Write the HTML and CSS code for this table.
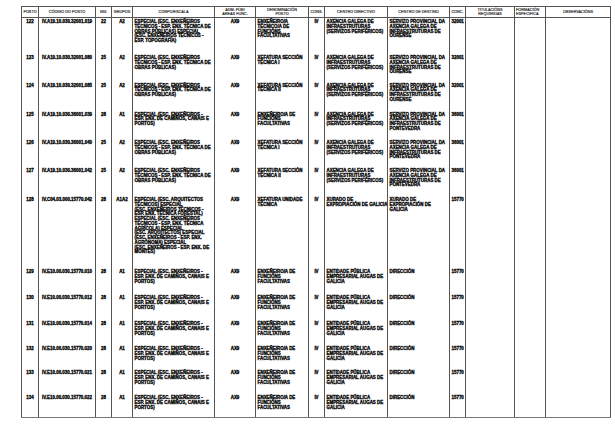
FILE: index.html
```html
<!DOCTYPE html>
<html>
<head>
<meta charset="utf-8">
<link rel="stylesheet" href="styles.css">
</head>
<body>
<div class="page">
<table class="t">
<colgroup>
<col class="c1"><col class="c2"><col class="c3"><col class="c4"><col class="c5"><col class="c6"><col class="c7"><col class="c8"><col class="c9"><col class="c10"><col class="c11"><col class="c12"><col class="c13"><col class="c14">
</colgroup>
<thead>
<tr class="hd">
<th>POSTO</th><th>CÓDIGO DO POSTO</th><th>NIV.</th><th class="g">GRUPOS</th><th class="gl">CORPO/ESCALA</th><th>ADM. PÚB/<br>ÁREAS FUNC.</th><th>DENOMINACIÓN<br>POSTO</th><th class="gl">CONS.</th><th class="gl">CENTRO DIRECTIVO</th><th>CENTRO DE DESTINO</th><th class="gl">CONC.</th><th class="gl">TITULACIÓNS<br>REQUIRIDAS</th><th class="lft">FORMACIÓN<br>ESPECÍFICA</th><th>OBSERVACIÓNS</th>
</tr>
</thead>
<tbody>
<tr class="r1">
<td class="ctr">122</td><td class="ctr">IV.A19.10.030.32001.019</td><td class="ctr">22</td><td class="ctr">A2</td><td class="gl">ESPECIAL (ESC. ENXEÑEIROS<br>TÉCNICOS - ESP. ENX. TÉCNICA DE<br>OBRAS PÚBLICAS) ESPECIAL<br>(ESC. ENXEÑEIROS TÉCNICOS -<br>ESP. TOPOGRAFÍA)</td><td class="ctr">AX9</td><td>ENXEÑEIRO/A<br>TÉCNICO/A DE<br>FUNCIÓNS<br>FACULTATIVAS</td><td class="ctr gl">IV</td><td class="gl">AXENCIA GALEGA DE<br>INFRAESTRUTURAS<br>(SERVIZOS PERIFÉRICOS)</td><td>SERVIZO PROVINCIAL DA<br>AXENCIA GALEGA DE<br>INFRAESTRUTURAS DE<br>OURENSE</td><td class="gl">32001</td><td class="gl"></td><td></td><td></td>
</tr>
<tr class="r2">
<td class="ctr">123</td><td class="ctr">IV.A19.10.030.32001.080</td><td class="ctr">25</td><td class="ctr">A2</td><td class="gl">ESPECIAL (ESC. ENXEÑEIROS<br>TÉCNICOS - ESP. ENX. TÉCNICA DE<br>OBRAS PÚBLICAS)</td><td class="ctr">AX9</td><td>XEFATURA SECCIÓN<br>TÉCNICA I</td><td class="ctr gl">IV</td><td class="gl">AXENCIA GALEGA DE<br>INFRAESTRUTURAS<br>(SERVIZOS PERIFÉRICOS)</td><td>SERVIZO PROVINCIAL DA<br>AXENCIA GALEGA DE<br>INFRAESTRUTURAS DE<br>OURENSE</td><td class="gl">32001</td><td class="gl"></td><td></td><td></td>
</tr>
<tr class="r3">
<td class="ctr">124</td><td class="ctr">IV.A19.10.030.32001.085</td><td class="ctr">25</td><td class="ctr">A2</td><td class="gl">ESPECIAL (ESC. ENXEÑEIROS<br>TÉCNICOS - ESP. ENX. TÉCNICA DE<br>OBRAS PÚBLICAS)</td><td class="ctr">AX9</td><td>XEFATURA SECCIÓN<br>TÉCNICA II</td><td class="ctr gl">IV</td><td class="gl">AXENCIA GALEGA DE<br>INFRAESTRUTURAS<br>(SERVIZOS PERIFÉRICOS)</td><td>SERVIZO PROVINCIAL DA<br>AXENCIA GALEGA DE<br>INFRAESTRUTURAS DE<br>OURENSE</td><td class="gl">32001</td><td class="gl"></td><td></td><td></td>
</tr>
<tr class="r4">
<td class="ctr">125</td><td class="ctr">IV.A19.10.030.36001.039</td><td class="ctr">28</td><td class="ctr">A1</td><td class="gl">ESPECIAL (ESC. ENXEÑEIROS -<br>ESP. ENX. DE CAMIÑOS, CANAIS E<br>PORTOS)</td><td class="ctr">AX9</td><td>ENXEÑEIRO/A DE<br>FUNCIÓNS<br>FACULTATIVAS</td><td class="ctr gl">IV</td><td class="gl">AXENCIA GALEGA DE<br>INFRAESTRUTURAS<br>(SERVIZOS PERIFÉRICOS)</td><td>SERVIZO PROVINCIAL DA<br>AXENCIA GALEGA DE<br>INFRAESTRUTURAS DE<br>PONTEVEDRA</td><td class="gl">36001</td><td class="gl"></td><td></td><td></td>
</tr>
<tr class="r5">
<td class="ctr">126</td><td class="ctr">IV.A19.10.030.36001.040</td><td class="ctr">25</td><td class="ctr">A2</td><td class="gl">ESPECIAL (ESC. ENXEÑEIROS<br>TÉCNICOS - ESP. ENX. TÉCNICA DE<br>OBRAS PÚBLICAS)</td><td class="ctr">AX9</td><td>XEFATURA SECCIÓN<br>TÉCNICA I</td><td class="ctr gl">IV</td><td class="gl">AXENCIA GALEGA DE<br>INFRAESTRUTURAS<br>(SERVIZOS PERIFÉRICOS)</td><td>SERVIZO PROVINCIAL DA<br>AXENCIA GALEGA DE<br>INFRAESTRUTURAS DE<br>PONTEVEDRA</td><td class="gl">36001</td><td class="gl"></td><td></td><td></td>
</tr>
<tr class="r6">
<td class="ctr">127</td><td class="ctr">IV.A19.10.030.36001.042</td><td class="ctr">25</td><td class="ctr">A2</td><td class="gl">ESPECIAL (ESC. ENXEÑEIROS<br>TÉCNICOS - ESP. ENX. TÉCNICA DE<br>OBRAS PÚBLICAS)</td><td class="ctr">AX9</td><td>XEFATURA SECCIÓN<br>TÉCNICA II</td><td class="ctr gl">IV</td><td class="gl">AXENCIA GALEGA DE<br>INFRAESTRUTURAS<br>(SERVIZOS PERIFÉRICOS)</td><td>SERVIZO PROVINCIAL DA<br>AXENCIA GALEGA DE<br>INFRAESTRUTURAS DE<br>PONTEVEDRA</td><td class="gl">36001</td><td class="gl"></td><td></td><td></td>
</tr>
<tr class="r7">
<td class="ctr">128</td><td class="ctr">IV.C04.03.000.15770.042</td><td class="ctr">28</td><td class="ctr">A1A2</td><td class="gl">ESPECIAL (ESC. ARQUITECTOS<br>TÉCNICOS) ESPECIAL<br>(ESC. ENXEÑEIROS TÉCNICOS -<br>ESP. ENX. TÉCNICA FORESTAL)<br>ESPECIAL (ESC. ENXEÑEIROS<br>TÉCNICOS - ESP. ENX. TÉCNICA<br>AGRÍCOLA) ESPECIAL<br>(ESC. ARQUITECTOS) ESPECIAL<br>(ESC. ENXEÑEIROS - ESP. ENX.<br>AGRÓNOMA) ESPECIAL<br>(ESC. ENXEÑEIROS - ESP. ENX. DE<br>MONTES)</td><td class="ctr">AX9</td><td>XEFATURA UNIDADE<br>TÉCNICA</td><td class="ctr gl">IV</td><td class="gl">XURADO DE<br>EXPROPIACIÓN DE GALICIA</td><td>XURADO DE<br>EXPROPIACIÓN DE<br>GALICIA</td><td class="gl">15770</td><td class="gl"></td><td></td><td></td>
</tr>
<tr class="r8">
<td class="ctr">129</td><td class="ctr">IV.E10.00.030.15770.010</td><td class="ctr">28</td><td class="ctr">A1</td><td class="gl">ESPECIAL (ESC. ENXEÑEIROS -<br>ESP. ENX. DE CAMIÑOS, CANAIS E<br>PORTOS)</td><td class="ctr">AX9</td><td>ENXEÑEIRO/A DE<br>FUNCIÓNS<br>FACULTATIVAS</td><td class="ctr gl">IV</td><td class="gl">ENTIDADE PÚBLICA<br>EMPRESARIAL AUGAS DE<br>GALICIA</td><td>DIRECCIÓN</td><td class="gl">15770</td><td class="gl"></td><td></td><td></td>
</tr>
<tr class="r9">
<td class="ctr">130</td><td class="ctr">IV.E10.00.030.15770.012</td><td class="ctr">28</td><td class="ctr">A1</td><td class="gl">ESPECIAL (ESC. ENXEÑEIROS -<br>ESP. ENX. DE CAMIÑOS, CANAIS E<br>PORTOS)</td><td class="ctr">AX9</td><td>ENXEÑEIRO/A DE<br>FUNCIÓNS<br>FACULTATIVAS</td><td class="ctr gl">IV</td><td class="gl">ENTIDADE PÚBLICA<br>EMPRESARIAL AUGAS DE<br>GALICIA</td><td>DIRECCIÓN</td><td class="gl">15770</td><td class="gl"></td><td></td><td></td>
</tr>
<tr class="r10">
<td class="ctr">131</td><td class="ctr">IV.E10.00.030.15770.014</td><td class="ctr">28</td><td class="ctr">A1</td><td class="gl">ESPECIAL (ESC. ENXEÑEIROS -<br>ESP. ENX. DE CAMIÑOS, CANAIS E<br>PORTOS)</td><td class="ctr">AX9</td><td>ENXEÑEIRO/A DE<br>FUNCIÓNS<br>FACULTATIVAS</td><td class="ctr gl">IV</td><td class="gl">ENTIDADE PÚBLICA<br>EMPRESARIAL AUGAS DE<br>GALICIA</td><td>DIRECCIÓN</td><td class="gl">15770</td><td class="gl"></td><td></td><td></td>
</tr>
<tr class="r11">
<td class="ctr">132</td><td class="ctr">IV.E10.00.030.15770.020</td><td class="ctr">28</td><td class="ctr">A1</td><td class="gl">ESPECIAL (ESC. ENXEÑEIROS -<br>ESP. ENX. DE CAMIÑOS, CANAIS E<br>PORTOS)</td><td class="ctr">AX9</td><td>ENXEÑEIRO/A DE<br>FUNCIÓNS<br>FACULTATIVAS</td><td class="ctr gl">IV</td><td class="gl">ENTIDADE PÚBLICA<br>EMPRESARIAL AUGAS DE<br>GALICIA</td><td>DIRECCIÓN</td><td class="gl">15770</td><td class="gl"></td><td></td><td></td>
</tr>
<tr class="r12">
<td class="ctr">133</td><td class="ctr">IV.E10.00.030.15770.021</td><td class="ctr">28</td><td class="ctr">A1</td><td class="gl">ESPECIAL (ESC. ENXEÑEIROS -<br>ESP. ENX. DE CAMIÑOS, CANAIS E<br>PORTOS)</td><td class="ctr">AX9</td><td>ENXEÑEIRO/A DE<br>FUNCIÓNS<br>FACULTATIVAS</td><td class="ctr gl">IV</td><td class="gl">ENTIDADE PÚBLICA<br>EMPRESARIAL AUGAS DE<br>GALICIA</td><td>DIRECCIÓN</td><td class="gl">15770</td><td class="gl"></td><td></td><td></td>
</tr>
<tr class="r13">
<td class="ctr">134</td><td class="ctr">IV.E10.00.030.15770.022</td><td class="ctr">28</td><td class="ctr">A1</td><td class="gl">ESPECIAL (ESC. ENXEÑEIROS -<br>ESP. ENX. DE CAMIÑOS, CANAIS E<br>PORTOS)</td><td class="ctr">AX9</td><td>ENXEÑEIRO/A DE<br>FUNCIÓNS<br>FACULTATIVAS</td><td class="ctr gl">IV</td><td class="gl">ENTIDADE PÚBLICA<br>EMPRESARIAL AUGAS DE<br>GALICIA</td><td>DIRECCIÓN</td><td class="gl">15770</td><td class="gl"></td><td></td><td></td>
</tr>
</tbody>
</table>
</div>
</body>
</html>
```

FILE: styles.css
```css
html, body {
  margin: 0;
  padding: 0;
  background: #ffffff;
}

.page {
  padding: 6px 0 0 21px;
  font-family: "Liberation Sans", Arial, sans-serif;
  color: #000;
}

.t {
  border-collapse: collapse;
  table-layout: fixed;
  width: 589px;
}

.c1 { width: 17px; }
.c2 { width: 57px; }
.c3 { width: 16px; }
.c4 { width: 21px; }
.c5 { width: 82px; }
.c6 { width: 41px; }
.c7 { width: 53px; }
.c8 { width: 16px; }
.c9 { width: 63px; }
.c10 { width: 62px; }
.c11 { width: 16px; }
.c12 { width: 49px; }
.c13 { width: 31px; }
.c14 { width: 65px; }

.t th {
  font-size: 3.8px;
  line-height: 4px;
  font-weight: normal;
  color: #1a1a1a;
  -webkit-text-stroke: 0.15px #1a1a1a;
  text-align: center;
  vertical-align: middle;
  white-space: nowrap;
  overflow: hidden;
  padding: 0 1px;
  height: 10px;
  border-top: 1px solid #555;
  border-bottom: 1px solid #555;
  border-left: 1px solid #555;
  border-right: 1px solid #555;
}

.t th.lft {
  text-align: left;
}

.t td {
  font-size: 4.45px;
  line-height: 4.77px;
  font-weight: bold;
  -webkit-text-stroke: 0.3px #000;
  text-align: left;
  vertical-align: top;
  white-space: nowrap;
  overflow: hidden;
  padding: 2px 1px 0 1.5px;
  border-left: 1px solid #555;
  border-right: 1px solid #555;
}

.t td.ctr {
  text-align: center;
  padding-left: 0;
  padding-right: 0;
}

.t .gl {
  border-left: 1.5px solid #a0a0a0;
}

.t tbody tr:last-child td {
  border-bottom: 1.5px solid #777;
}

.r1 { height: 36.5px; }
.r2 { height: 27.5px; }
.r3 { height: 29px; }
.r4 { height: 28.5px; }
.r5 { height: 28px; }
.r6 { height: 29px; }
.r7 { height: 72px; }
.r8 { height: 26px; }
.r9 { height: 26px; }
.r10 { height: 25px; }
.r11 { height: 24.3px; }
.r12 { height: 25px; }
.r13 { height: 23px; }
```
